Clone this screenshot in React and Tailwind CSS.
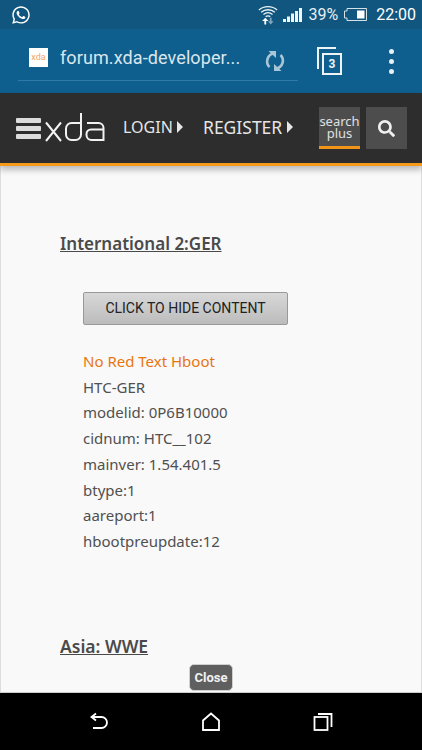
import { FaSearch, FaWhatsapp } from "react-icons/fa";

function WifiIcon() {
  return (
    <svg width="20" height="20" viewBox="0 0 22 22" fill="none" stroke="#eef3f6" strokeWidth="1.400">
      <path d="M1 5.500C6.500 .5 15.500 .5 21 5.500" />
      <path d="M3.500 8C7.500 4.300 14.500 4.300 18.500 8" />
      <path d="M6 10.500C9 8 13 8 16 10.500" />
      <path d="M8.500 12.800C10 11.700 12 11.700 13.500 12.800" />
      <path d="M7 21.500v-4H4.500L8 14l3.500 3.500H9v4z" fill="#ffffff" stroke="none" />
      <path d="M13 14v4h-2.200l3.200 3.500 3.200-3.500H15v-4z" fill="#7fa6bd" stroke="none" />
    </svg>
  );
}

function SignalIcon() {
  return (
    <svg width="19" height="14" viewBox="0 0 19 14" fill="#f2f5f7">
      <rect x="0" y="11" width="3" height="3" />
      <rect x="4" y="8.500" width="3" height="5.500" />
      <rect x="8" y="5.500" width="3" height="8.500" />
      <rect x="12" y="3" width="3" height="11" />
      <rect x="16" y="0" width="3" height="14" />
    </svg>
  );
}

function BatteryIcon() {
  return (
    <svg width="23" height="13" viewBox="0 0 23 13" fill="none">
      <path d="M3 .5h19.500v12H3V10H.5V3H3z" stroke="#d5e0e7" strokeWidth="1" />
      <rect x="13" y="2.500" width="7.500" height="8" fill="#ffffff" />
    </svg>
  );
}

function RefreshIcon() {
  return (
    <svg width="22" height="22" viewBox="0 0 22 22" fill="none" stroke="#a9c5d6" strokeWidth="2.600">
      <path d="M9.500 3.500A8 8 0 0 0 5.500 17" />
      <path d="M12.500 18.500A8 8 0 0 0 16.500 5" />
      <path d="M3.500 1.500h7.500v7z" fill="#a9c5d6" stroke="none" transform="translate(1 -0.500)" />
      <path d="M18.500 20.500h-7.500v-7z" fill="#a9c5d6" stroke="none" transform="translate(-1 0.500)" />
    </svg>
  );
}

function TabsIcon() {
  return (
    <div className="relative w-[25px] h-[28px]">
      <div className="absolute left-0 top-0 w-[19px] h-[22px] border-l-2 border-t-2 border-[#eef3f6]" />
      <div className="absolute left-[5px] top-[6px] w-[20px] h-[22px] border-2 border-[#eef3f6] bg-[#0e5f8e] flex items-center justify-center text-[12px] font-bold text-[#eef3f6] leading-none">
        3
      </div>
    </div>
  );
}

function XdaLogo() {
  return (
    <svg width="60" height="29" viewBox="0 0 60 29" fill="none" stroke="#f2f2f2" strokeWidth="2">
      <path d="M1 9.500L16 28M16 9.500L1 28" />
      <path d="M36 0v21.500a5.500 5.500 0 0 1-5.500 5.500h-4a5.500 5.500 0 0 1-5.500-5.500v-6a5.500 5.500 0 0 1 5.500-5.500H36" />
      <path d="M42 10h11.500a5 5 0 0 1 5 5v12h-12a5 5 0 0 1-5-5v-1a4.500 4.500 0 0 1 4.500-4.500h12.500" />
    </svg>
  );
}

const lines = ["HTC-GER", "modelid: 0P6B10000", "cidnum: HTC__102", "mainver: 1.54.401.5", "btype:1", "aareport:1", "hbootpreupdate:12"];

export default function App() {
  return (
    <div className="relative w-[422px] h-[750px] overflow-hidden flex flex-col font-['Open_Sans',sans-serif] bg-black">
      {/* status bar */}
      <div className="h-[29px] bg-[#11567e] flex items-center pl-[11px] pr-[6px] text-[#e8eef2] font-['Roboto',sans-serif]">
        <FaWhatsapp className="text-[20px] text-white" />
        <div className="ml-auto flex items-center">
          <WifiIcon />
          <div className="ml-[5px]"><SignalIcon /></div>
          <span className="ml-[6px] text-[16px]">39%</span>
          <div className="ml-[6px]"><BatteryIcon /></div>
          <span className="ml-[9px] text-[16px] text-white">22:00</span>
        </div>
      </div>

      {/* browser toolbar */}
      <div className="h-[64px] bg-[#0e5f8e] flex items-start pt-[14px] pl-[18px] font-['Roboto',sans-serif]">
        <div className="w-[280px] h-[38px] border-b border-[#2f7aa6] flex items-start">
          <div className="ml-[11px] mt-[5px] w-[19px] h-[19px] bg-white flex items-center justify-center text-[9px] leading-none text-[#f2a65a]">xda</div>
          <span className="ml-[12px] text-[18px] leading-[30px] text-[#dbe6ec] tracking-[0.1px]">forum.xda-developer...</span>
        </div>
        <div className="ml-[-34px] mt-[7px]"><RefreshIcon /></div>
        <div className="ml-[31px] mt-[4px]"><TabsIcon /></div>
        <div className="ml-[47px] mt-[6px] flex flex-col gap-[5px]">
          <div className="w-[5px] h-[5px] rounded-full bg-[#e8f0f4]" />
          <div className="w-[5px] h-[5px] rounded-full bg-[#e8f0f4]" />
          <div className="w-[5px] h-[5px] rounded-full bg-[#e8f0f4]" />
        </div>
      </div>

      {/* xda nav */}
      <div className="h-[73px] bg-[#2d2d2d] border-b-[3px] border-[#f59a1b] flex items-center pl-[16px] shadow-[0_4px_6px_rgba(0,0,0,0.25)] z-10 font-['Noto_Sans',sans-serif] text-[#e6e6e6]">
        <div className="flex flex-col gap-[3px] w-[25px]">
          <div className="h-[5px] bg-[#dcdcdc] rounded-[1px]" />
          <div className="h-[5px] bg-[#dcdcdc] rounded-[1px]" />
          <div className="h-[5px] bg-[#dcdcdc] rounded-[1px]" />
        </div>
        <div className="ml-[4px] mb-[2px]"><XdaLogo /></div>
        <span className="ml-[18px] mb-[2px] w-[50px] text-[16px]">LOGIN</span>
        <div className="ml-[4px] mb-[2px] w-0 h-0 border-y-[6px] border-y-transparent border-l-[6px] border-l-[#e6e6e6]" />
        <span className="ml-[20px] mb-[2px] w-[80px] text-[17.500px]">REGISTER</span>
        <div className="ml-[4px] mb-[2px] w-0 h-0 border-y-[6px] border-y-transparent border-l-[6px] border-l-[#e6e6e6]" />
        <div className="ml-[26px] w-[41px] h-[42px] bg-[#4d4d4d] border-b-[3px] border-[#f0951a] flex flex-col items-center justify-center text-[13px] leading-[12px] text-[#e0e0e0]">
          <span>search</span>
          <span>plus</span>
        </div>
        <div className="ml-[6px] w-[41px] h-[42px] bg-[#4d4d4d] flex items-center justify-center">
          <FaSearch className="text-[17px] text-[#f0f0f0]" />
        </div>
      </div>

      {/* page content */}
      <div className="flex-1 bg-[#f9f9f9] border-x border-b border-x-[#dddddd] border-b-[#cccccc] pl-[59px] pt-[65px] text-[#505050] font-['Noto_Sans',sans-serif]">
        <h2 className="text-[17px] font-semibold underline leading-[26px] text-[#4a4a4a]">International 2:GER</h2>
        <button className="block ml-[23px] mt-[35px] w-[205px] h-[33px] rounded-[2px] border border-[#999999] bg-gradient-to-b from-[#d8d8d8] to-[#bcbcbc] text-[14px] text-[#222222] font-['Roboto',sans-serif]">
          CLICK TO HIDE CONTENT
        </button>
        <div className="ml-[23px] mt-[24px] text-[15px] leading-[25.700px]">
          <div className="text-[#e8760f]">No Red Text Hboot</div>
          {lines.map((line) => (
            <div key={line}>{line}</div>
          ))}
        </div>
        <h2 className="mt-[78px] text-[17.500px] font-semibold underline leading-[26px] text-[#4a4a4a]">Asia: WWE</h2>
      </div>

      {/* Close pill, floats over the page */}
      <button className="absolute left-[189px] top-[664px] w-[44px] h-[27px] rounded-[5px] border border-[#d0d0d0] bg-[#5f5f5f] text-[13px] font-bold text-[#f2f2f2] font-['Roboto',sans-serif]">
        Close
      </button>

      {/* android nav */}
      <div className="h-[57px] bg-black flex items-start pt-[19px]">
        <svg width="20" height="20" viewBox="0 0 20 20" fill="none" stroke="#ffffff" strokeWidth="1.800" className="ml-[89px]">
          <path d="M3 5h9.500a5.500 5.500 0 0 1 0 11H4" />
          <path d="M7 1.500L2.500 5 7 8.500" />
        </svg>
        <svg width="20" height="20" viewBox="0 0 20 20" fill="none" stroke="#ffffff" strokeWidth="1.800" className="ml-[92px]">
          <path d="M2 18V8.500L10 1.500l8 7V18z" />
        </svg>
        <svg width="20" height="20" viewBox="0 0 20 20" fill="none" stroke="#ffffff" strokeWidth="1.800" className="ml-[92px]">
          <rect x="1.500" y="5" width="13" height="13" />
          <path d="M5 2h13.500v13" />
        </svg>
      </div>
    </div>
  );
}
